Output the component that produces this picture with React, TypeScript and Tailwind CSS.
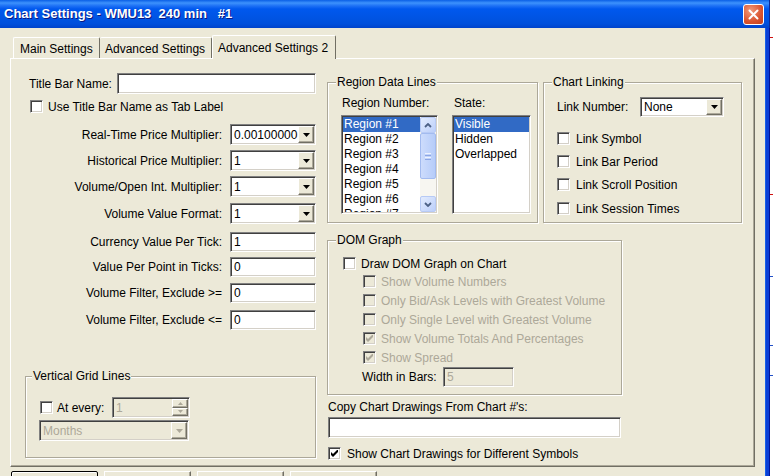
import React from "react";

const sunken =
  "border border-t-[#808080] border-l-[#808080] border-r-white border-b-white shadow-[inset_1px_1px_0_#404040,inset_-1px_-1px_0_#d4d0c8]";
const raised =
  "border border-t-white border-l-white border-r-[#716f64] border-b-[#716f64] shadow-[inset_-1px_-1px_0_#aca899]";

function Check({ checked, disabled }: { checked?: boolean; disabled?: boolean }) {
  return (
    <span
      className={`flex h-[13px] w-[13px] shrink-0 items-center justify-center ${sunken} ${
        disabled ? "bg-[#ece9d8]" : "bg-white"
      }`}
    >
      {checked ? (
        <svg width="7" height="7" viewBox="0 0 7 7">
          <polygon points="0,2 2,4 6,0 7,0 7,2 2,7 0,5" fill={disabled ? "#aca899" : "#000"} />
        </svg>
      ) : null}
    </span>
  );
}

function Arrow({ color = "#000" }: { color?: string }) {
  return (
    <svg width="7" height="4" viewBox="0 0 7 4">
      <polygon points="0,0 7,0 3.5,4" fill={color} />
    </svg>
  );
}

function Combo({
  value,
  className,
  disabled,
}: {
  value: string;
  className: string;
  disabled?: boolean;
}) {
  return (
    <div className={`flex p-px ${sunken} ${disabled ? "bg-[#ece9d8]" : "bg-white"} ${className}`}>
      <span className={`flex flex-1 items-center pl-[2px] ${disabled ? "text-[#aca899]" : ""}`}>{value}</span>
      <span className={`flex w-[16px] items-center justify-center bg-[#ece9d8] ${raised}`}>
        <Arrow color={disabled ? "#aca899" : "#000"} />
      </span>
    </div>
  );
}

function TextBox({ value, className, disabled }: { value?: string; className: string; disabled?: boolean }) {
  return (
    <div
      className={`flex items-center pl-[3px] ${sunken} ${
        disabled ? "bg-[#ece9d8] text-[#aca899]" : "bg-white"
      } ${className}`}
    >
      {value}
    </div>
  );
}

function Group({
  label,
  className,
  labelLeft = "left-[8px]",
  children,
}: {
  label: string;
  className: string;
  labelLeft?: string;
  children: React.ReactNode;
}) {
  return (
    <div
      className={`relative flex flex-col border border-[#aca899] shadow-[inset_1px_1px_0_#fff,1px_1px_0_#fff] ${className}`}
    >
      <span className={`absolute -top-[8px] ${labelLeft} bg-[#ece9d8] px-px`}>{label}</span>
      {children}
    </div>
  );
}

function ScrollBtn({ up }: { up?: boolean }) {
  return (
    <div className="flex h-[16px] items-center justify-center rounded-[2px] border border-[#b7caf5] bg-[linear-gradient(135deg,#e3ecfe,#bccffa)]">
      <svg width="8" height="5" viewBox="0 0 8 5">
        <polyline
          points={up ? "1,4 4,1 7,4" : "1,1 4,4 7,1"}
          fill="none"
          stroke="#4d6185"
          strokeWidth="1.8"
        />
      </svg>
    </div>
  );
}

function ListBox({ items, className, scroll }: { items: string[]; className: string; scroll?: boolean }) {
  return (
    <div className={`flex h-[99px] overflow-hidden bg-white p-px ${sunken} ${className}`}>
      <div className="flex-1 overflow-hidden">
        {items.map((t, i) => (
          <div
            key={t}
            className={`h-[15px] pl-[1px] leading-[15px] ${i === 0 ? "bg-[#316ac5] text-white" : ""}`}
          >
            {t}
          </div>
        ))}
      </div>
      {scroll ? (
        <div className="flex w-[16px] flex-col bg-[#f7f6f1]">
          <ScrollBtn up />
          <div className="flex h-[46px] flex-col items-center justify-center gap-px rounded-[2px] border border-[#a3bbef] bg-[linear-gradient(90deg,#cddcfc,#b6ccf9)]">
            <span className="h-px w-[6px] bg-[#eef3fe]" />
            <span className="h-px w-[6px] bg-[#8ca6e4]" />
            <span className="h-px w-[6px] bg-[#eef3fe]" />
            <span className="h-px w-[6px] bg-[#8ca6e4]" />
          </div>
          <div className="flex-1" />
          <ScrollBtn />
        </div>
      ) : null}
    </div>
  );
}

function Spin() {
  return (
    <div className={`flex h-[21px] w-[78px] bg-[#ece9d8] p-px ${sunken}`}>
      <span className="flex flex-1 items-center pl-[2px] text-[#aca899]">1</span>
      <div className="flex w-[16px] flex-col">
        <span className={`flex flex-1 items-center justify-center ${raised}`}>
          <svg width="5" height="3" viewBox="0 0 5 3">
            <polygon points="0,3 5,3 2.5,0" fill="#aca899" />
          </svg>
        </span>
        <span className={`flex flex-1 items-center justify-center ${raised}`}>
          <svg width="5" height="3" viewBox="0 0 5 3">
            <polygon points="0,0 5,0 2.5,3" fill="#aca899" />
          </svg>
        </span>
      </div>
    </div>
  );
}

const rows = [
  { label: "Real-Time Price Multiplier:", value: "0.00100000", combo: true, mt: "mt-[11px]" },
  { label: "Historical Price Multiplier:", value: "1", combo: true, mt: "mt-[5px]" },
  { label: "Volume/Open Int. Multiplier:", value: "1", combo: true, mt: "mt-[5px]" },
  { label: "Volume Value Format:", value: "1", combo: true, mt: "mt-[6px]" },
  { label: "Currency Value Per Tick:", value: "1", combo: false, mt: "mt-[8px]" },
  { label: "Value Per Point in Ticks:", value: "0", combo: false, mt: "mt-[5px]" },
  { label: "Volume Filter, Exclude >=", value: "0", combo: false, mt: "mt-[6px]" },
  { label: "Volume Filter, Exclude <=", value: "0", combo: false, mt: "mt-[7px]" },
];

const linkRows = [
  { label: "Link Symbol", mt: "mt-[15px]" },
  { label: "Link Bar Period", mt: "mt-[10px]" },
  { label: "Link Scroll Position", mt: "mt-[10px]" },
  { label: "Link Session Times", mt: "mt-[11px]" },
];

const domRows = [
  { label: "Show Volume Numbers", checked: false },
  { label: "Only Bid/Ask Levels with Greatest Volume", checked: false },
  { label: "Only Single Level with Greatest Volume", checked: false },
  { label: "Show Volume Totals And Percentages", checked: true },
  { label: "Show Spread", checked: true },
];

export default function App() {
  return (
    <div className="flex h-[476px] w-[773px] overflow-hidden bg-white font-['Liberation_Sans',Arial,sans-serif] text-[12px] leading-[14px] text-black">
      <div className="flex w-[770px] flex-col">
        {/* title bar */}
        <div className="flex h-[28px] shrink-0 items-center justify-between border-r border-[#0a2a9c] bg-[linear-gradient(to_bottom,#0a5fe6_0px,#3d92fc_3px,#1c6ff5_6px,#0058ee_9px,#0054e3_18px,#004fdb_24px,#0043cb_28px)] pl-[4px] pr-[5px]">
          <span className="whitespace-pre text-[13px] font-bold text-white [text-shadow:1px_1px_#0a1883]">
            {"Chart Settings - WMU13  240 min   #1"}
          </span>
          <span className="flex h-[21px] w-[21px] items-center justify-center rounded-[3px] border border-white bg-[radial-gradient(circle_at_35%_30%,#f19a7a,#d9532f_60%,#c2401d)]">
            <svg width="11" height="11" viewBox="0 0 11 11">
              <path d="M1.5 1.5 L9.5 9.5 M9.5 1.5 L1.5 9.5" stroke="#fff" strokeWidth="2" strokeLinecap="round" />
            </svg>
          </span>
        </div>

        <div className="flex flex-1">
          <div className="flex flex-1 flex-col bg-[#ece9d8] pl-[10px] pt-[7px]">
            {/* tabs */}
            <div className="relative z-10 ml-[3px] flex h-[24px] items-end">
              <div className={`mb-px h-[21px] w-[87px] rounded-t-[2px] border-t border-l border-white border-r border-r-[#716f64] pl-[6px] pt-[4px]`}>
                Main Settings
              </div>
              <div className="mb-px h-[21px] w-[112px] rounded-t-[2px] border-t border-white border-r border-r-[#716f64] pl-[5px] pt-[4px]">
                Advanced Settings
              </div>
              <div className="h-[24px] w-[124px] rounded-t-[2px] border-t border-l border-white border-r border-r-[#716f64] bg-[#ece9d8] pl-[5px] pt-[5px]">
                Advanced Settings 2
              </div>
            </div>

            {/* tab pane */}
            <div className="-mt-px flex h-[409px] w-[745px] border border-t-white border-l-white border-r-[#716f64] border-b-[#716f64] shadow-[inset_-1px_-1px_0_#aca899]">
              {/* left column */}
              <div className="ml-[14px] flex w-[291px] flex-col">
                <div className="mt-[14px] flex h-[21px] items-center">
                  <span className="pl-[4px]">Title Bar Name:</span>
                  <TextBox className="ml-auto h-[21px] w-[199px]" />
                </div>
                <div className="mt-[6px] flex h-[13px] items-center gap-[5px] pl-[5px]">
                  <Check />
                  <span>Use Title Bar Name as Tab Label</span>
                </div>
                {rows.map((r) => (
                  <div key={r.label} className={`flex items-center ${r.mt}`}>
                    <span className="w-[198px] pr-px text-right">{r.label}</span>
                    {r.combo ? (
                      <Combo value={r.value} className="ml-[7px] h-[21px] w-[86px]" />
                    ) : (
                      <TextBox value={r.value} className="ml-[7px] h-[20px] w-[86px]" />
                    )}
                  </div>
                ))}

                <Group label="Vertical Grid Lines" labelLeft="left-[6px]" className="mt-[46px] h-[82px] w-[291px]">
                  <div className="mt-[20px] flex h-[21px] items-center pl-[14px]">
                    <div className="flex w-[72px] items-center gap-[4px]">
                      <Check />
                      <span>At every:</span>
                    </div>
                    <Spin />
                  </div>
                  <Combo value="Months" disabled className="ml-[13px] mt-[2px] h-[21px] w-[150px]" />
                </Group>
              </div>

              {/* right column */}
              <div className="ml-[11px] flex w-[415px] flex-col">
                <div className="mt-[23px] flex gap-[5px]">
                  <Group label="Region Data Lines" className="h-[141px] w-[211px]">
                    <div className="flex gap-[14px] pl-[13px] pt-[13px]">
                      <div className="flex w-[97px] flex-col">
                        <span className="pl-px">Region Number:</span>
                        <ListBox
                          scroll
                          className="mt-[5px] w-[97px]"
                          items={["Region #1", "Region #2", "Region #3", "Region #4", "Region #5", "Region #6", "Region #7"]}
                        />
                      </div>
                      <div className="flex w-[79px] flex-col">
                        <span className="pl-[2px]">State:</span>
                        <ListBox className="mt-[5px] w-[79px]" items={["Visible", "Hidden", "Overlapped"]} />
                      </div>
                    </div>
                  </Group>
                  <Group label="Chart Linking" className="h-[141px] w-[199px]">
                    <div className="mt-[14px] flex h-[20px] items-center pl-[13px] pr-[17px]">
                      <span>Link Number:</span>
                      <Combo value="None" className="ml-auto h-[20px] w-[84px]" />
                    </div>
                    {linkRows.map((r) => (
                      <div key={r.label} className={`flex h-[13px] items-center gap-[6px] pl-[13px] ${r.mt}`}>
                        <Check />
                        <span>{r.label}</span>
                      </div>
                    ))}
                  </Group>
                </div>

                <Group label="DOM Graph" className="mt-[17px] h-[155px] w-[295px]">
                  <div className="ml-[15px] mt-[16px] flex h-[13px] items-center gap-[5px]">
                    <Check />
                    <span>Draw DOM Graph on Chart</span>
                  </div>
                  <div className="mt-[2px] flex flex-col">
                    {domRows.map((r) => (
                      <div key={r.label} className="flex h-[19px] items-center gap-[5px] pl-[35px] text-[#aca899]">
                        <Check disabled checked={r.checked} />
                        <span>{r.label}</span>
                      </div>
                    ))}
                  </div>
                  <div className="flex h-[20px] items-center pl-[34px]">
                    <span className="w-[81px]">Width in Bars:</span>
                    <TextBox value="5" disabled className="h-[20px] w-[71px]" />
                  </div>
                </Group>

                <span className="mt-[5px] pl-px">Copy Chart Drawings From Chart #'s:</span>
                <TextBox className="ml-px mt-[3px] h-[21px] w-[293px]" />
                <div className="ml-px mt-[9px] flex h-[13px] items-center gap-[6px]">
                  <Check checked />
                  <span>Show Chart Drawings for Different Symbols</span>
                </div>
              </div>
            </div>

            {/* dialog buttons (cut off at the bottom) */}
            <div className="ml-px mt-[4px] flex gap-[6px]">
              <div className="h-[23px] w-[87px] rounded-[2px] border border-black bg-[#ece9d8] shadow-[inset_1px_1px_0_#fff]" />
              <div className={`h-[23px] w-[87px] bg-[#ece9d8] ${raised}`} />
              <div className={`h-[23px] w-[87px] bg-[#ece9d8] ${raised}`} />
              <div className={`h-[23px] w-[87px] bg-[#ece9d8] ${raised}`} />
            </div>
          </div>
          {/* right window frame */}
          <div className="w-[5px] border-l border-l-[#1660e8] border-r border-r-[#00139a] bg-[#0a3fd6]" />
        </div>
      </div>

      {/* chart behind the dialog */}
      <svg width="3" height="476" viewBox="0 0 3 476" className="shrink-0">
        <line x1="0" y1="37.5" x2="3" y2="37.5" stroke="#d01010" />
        <line x1="0" y1="194.5" x2="3" y2="194.5" stroke="#d01010" />
        <line x1="0" y1="276.5" x2="3" y2="276.5" stroke="#2050c8" />
        <line x1="0" y1="345.5" x2="3" y2="345.5" stroke="#2050c8" />
        <line x1="0" y1="375.5" x2="3" y2="375.5" stroke="#2050c8" />
      </svg>
    </div>
  );
}
